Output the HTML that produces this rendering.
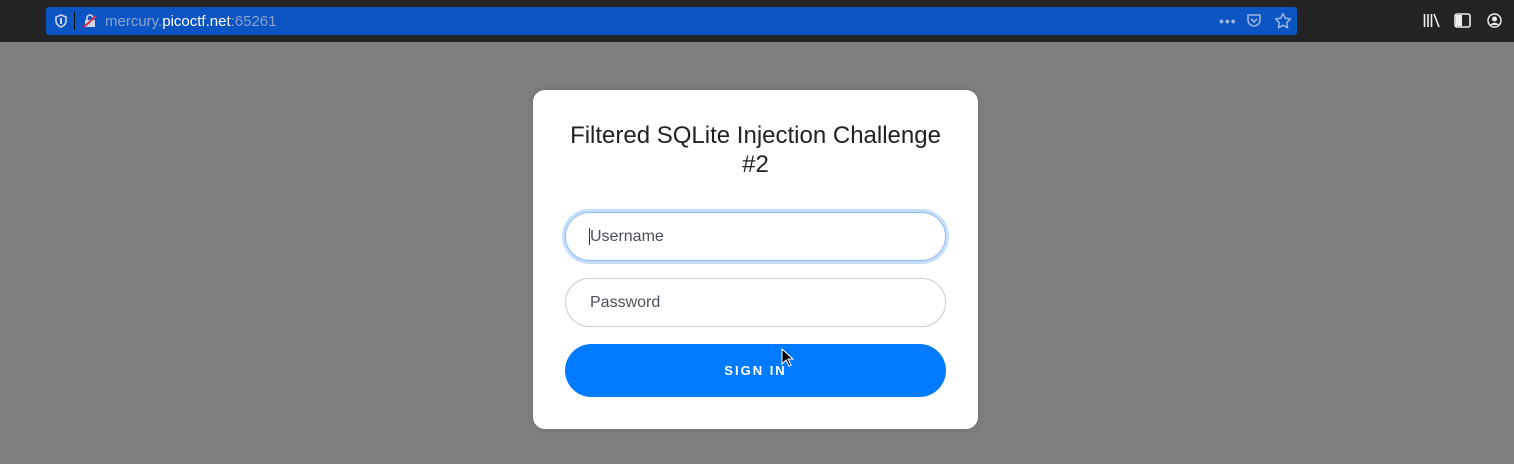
<!DOCTYPE html>
<html><head><style>
body{margin:0;width:1514px;height:464px;background:#7f7f7f;font-family:"Liberation Sans",sans-serif;overflow:hidden;position:relative}
.tb{position:absolute;left:0;top:0;width:1514px;height:42px;background:#232323}
.url{position:absolute;left:46px;top:7px;width:1251px;height:28px;background:#0c54c2;border-radius:3px}
.url .t{position:absolute;left:59px;top:6px;font-size:15px;color:#8aa3cc}
.url .t b{font-weight:normal;color:#fff}
.card{position:absolute;left:533px;top:90px;width:445px;height:339px;background:#fff;border-radius:12px;box-shadow:0 0 8px rgba(0,0,0,.15)}
h1{position:absolute;left:0;width:445px;top:31px;margin:0;text-align:center;font-weight:normal;font-size:24px;line-height:29px;color:#222}
.in{position:absolute;left:32px;width:381px;border:1px solid #ccc;border-radius:26px;box-sizing:border-box;font-size:16px;color:#495057;padding-left:24px}
.btn{position:absolute;left:32px;top:254px;width:381px;height:53px;background:#007bff;border-radius:27px;color:#fff;text-align:center;line-height:53px;font-size:13px;font-weight:bold;letter-spacing:2px}
</style></head><body>
<div class="tb">
<div class="url">
<svg style="position:absolute;left:8px;top:7px" width="14" height="14" viewBox="0 0 14 14"><path d="M7 1L2 3v4c0 3 2.5 5 5 6c2.5-1 5-3 5-6V3z" fill="none" stroke="#cfd8ea" stroke-width="1.6"/><path d="M7 4v6" stroke="#cfd8ea" stroke-width="2"/></svg>
<div style="position:absolute;left:28px;top:5px;width:1px;height:18px;background:#111"></div>
<svg style="position:absolute;left:36px;top:6px" width="16" height="16" viewBox="0 0 16 16"><rect x="3" y="7" width="10" height="7" fill="#cfd8ea"/><path d="M5 7V5a3 3 0 0 1 6 0v2" fill="none" stroke="#cfd8ea" stroke-width="1.6"/><path d="M2 14L14 3" stroke="#e22850" stroke-width="2"/></svg>
<div class="t">mercury.<b>picoctf.net</b>:65261</div>
<div style="position:absolute;left:1173px;top:6px;color:#9bb4dc;font-size:14px;font-weight:bold;letter-spacing:1px">•••</div>
<svg style="position:absolute;left:1200px;top:6px" width="16" height="16" viewBox="0 0 16 16"><path d="M2 2h12v5a6 6 0 0 1-12 0z" fill="none" stroke="#9bb4dc" stroke-width="1.6"/><path d="M5 6l3 3 3-3" fill="none" stroke="#9bb4dc" stroke-width="1.6"/></svg>
<svg style="position:absolute;left:1228px;top:5px" width="18" height="18" viewBox="0 0 18 18"><path d="M9 1.5l2.3 4.8 5.2.7-3.8 3.6.9 5.2L9 13.3l-4.6 2.5.9-5.2L1.5 7l5.2-.7z" fill="none" stroke="#9bb4dc" stroke-width="1.5" stroke-linejoin="round"/></svg>
</div>
<svg style="position:absolute;left:1423px;top:13px" width="17" height="15" viewBox="0 0 17 15"><path d="M1.5 1v13M5 1v13M8.5 1v13M11 1l5 13" stroke="#eee" stroke-width="1.6"/></svg>
<svg style="position:absolute;left:1454px;top:13px" width="17" height="15" viewBox="0 0 17 15"><rect x="1" y="1" width="15" height="13" rx="2" fill="none" stroke="#eee" stroke-width="1.6"/><rect x="2" y="2" width="6" height="11" fill="#eee"/></svg>
<svg style="position:absolute;left:1487px;top:13px" width="15" height="15" viewBox="0 0 15 15"><circle cx="7.5" cy="7.5" r="6.5" fill="none" stroke="#eee" stroke-width="1.5"/><circle cx="7.5" cy="6" r="2.5" fill="#eee"/><path d="M3 12c2-3 7-3 9 0" fill="#eee"/></svg>
</div>
<div class="card">
<h1>Filtered SQLite Injection Challenge<br>#2</h1>
<div class="in" style="top:122px;height:49px;border:1px solid #8ebcf7;box-shadow:0 0 0 3px #c6defc;line-height:47px;padding-left:23px"><span style="border-left:1px solid #333;">Username</span></div>
<div class="in" style="top:188px;height:49px;line-height:47px">Password</div>
<div class="btn">SIGN IN</div>
</div>
<svg style="position:absolute;left:781px;top:348px" width="14" height="20" viewBox="0 0 14 20"><path d="M1 1v15l4-4 3 6 2-1-3-6h5z" fill="#000" stroke="#fff" stroke-width="1"/></svg>
</body></html>
